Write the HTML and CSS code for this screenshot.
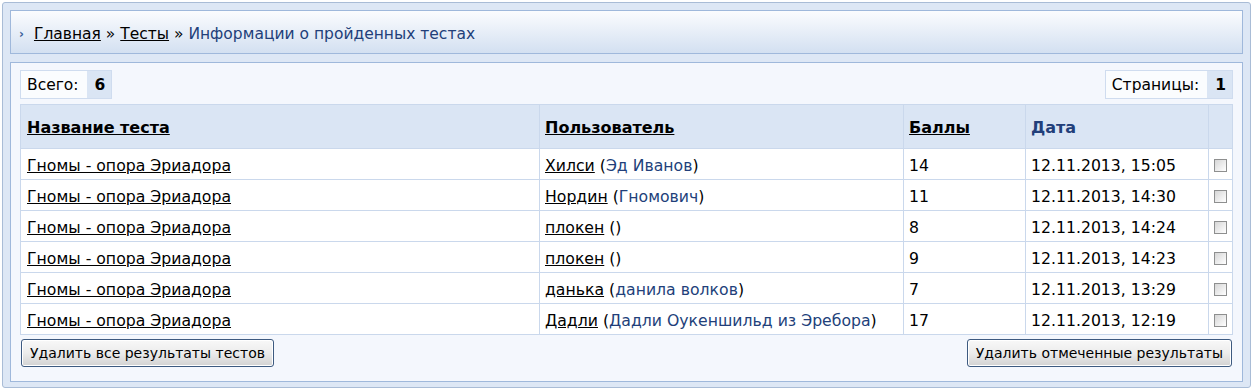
FILE: index.html
```html
<!DOCTYPE html>
<html lang="ru">
<head>
    <meta charset="UTF-8">
    <title>Информации о пройденных тестах</title>
    <link rel="stylesheet" href="styles.css">
</head>
<body>
    <div class="frame">
        <div class="crumbs">
            <span class="crumb-arrow">&#8250;</span>
            <a href="#">Главная</a> &raquo; <a href="#">Тесты</a> &raquo; <span class="current">Информации о пройденных тестах</span>
        </div>

        <div class="panel">
            <div class="pager-row">
                <div class="counter"><span class="label">Всего:</span><span class="value">6</span></div>
                <div class="counter"><span class="label">Страницы:</span><span class="value">1</span></div>
            </div>

            <table class="results">
                <thead>
                    <tr>
                        <th class="col-test"><a href="#">Название теста</a></th>
                        <th class="col-user"><a href="#">Пользователь</a></th>
                        <th class="col-score"><a href="#">Баллы</a></th>
                        <th class="col-date"><span class="sorted">Дата</span></th>
                        <th class="col-check"></th>
                    </tr>
                </thead>
                <tbody>
                    <tr>
                        <td><a href="#">Гномы - опора Эриадора</a></td>
                        <td><a href="#">Хилси</a> (<span class="name">Эд Иванов</span>)</td>
                        <td>14</td>
                        <td>12.11.2013, 15:05</td>
                        <td class="check"><span class="box"></span></td>
                    </tr>
                    <tr>
                        <td><a href="#">Гномы - опора Эриадора</a></td>
                        <td><a href="#">Нордин</a> (<span class="name">Гномович</span>)</td>
                        <td>11</td>
                        <td>12.11.2013, 14:30</td>
                        <td class="check"><span class="box"></span></td>
                    </tr>
                    <tr>
                        <td><a href="#">Гномы - опора Эриадора</a></td>
                        <td><a href="#">плокен</a> ()</td>
                        <td>8</td>
                        <td>12.11.2013, 14:24</td>
                        <td class="check"><span class="box"></span></td>
                    </tr>
                    <tr>
                        <td><a href="#">Гномы - опора Эриадора</a></td>
                        <td><a href="#">плокен</a> ()</td>
                        <td>9</td>
                        <td>12.11.2013, 14:23</td>
                        <td class="check"><span class="box"></span></td>
                    </tr>
                    <tr>
                        <td><a href="#">Гномы - опора Эриадора</a></td>
                        <td><a href="#">данька</a> (<span class="name">данила волков</span>)</td>
                        <td>7</td>
                        <td>12.11.2013, 13:29</td>
                        <td class="check"><span class="box"></span></td>
                    </tr>
                    <tr>
                        <td><a href="#">Гномы - опора Эриадора</a></td>
                        <td><a href="#">Дадли</a> (<span class="name">Дадли Оукеншильд из Эребора</span>)</td>
                        <td>17</td>
                        <td>12.11.2013, 12:19</td>
                        <td class="check"><span class="box"></span></td>
                    </tr>
                </tbody>
            </table>

            <div class="actions">
                <button class="btn">Удалить все результаты тестов</button>
                <button class="btn">Удалить отмеченные результаты</button>
            </div>
        </div>
    </div>
</body>
</html>
```

FILE: styles.css
```css
body {
    margin: 0;
    padding: 2px;
    background: #ffffff;
    font-family: 'DejaVu Sans', Verdana, sans-serif;
    font-size: 15px;
    color: #000000;
}

.frame {
    background: #dde7f5;
    border: 1px solid #a9bcd6;
    border-radius: 3px;
    padding: 7px;
    height: 386px;
    box-sizing: border-box;
}

.crumbs {
    height: 44px;
    box-sizing: border-box;
    border: 1px solid #9fb8db;
    background: linear-gradient(to bottom, #fbfcfe, #d3e0f1);
    padding: 4px 0 0 8px;
    display: flex;
    align-items: center;
    font-size: 15.5px;
    white-space: pre;
}

.crumb-arrow {
    color: #3a5e9a;
    font-size: 12px;
    margin-right: 10px;
    font-weight: bold;
}

.crumbs a {
    color: #000000;
}

.crumbs .current {
    color: #223f7a;
}

.panel {
    margin-top: 8px;
    background: #f4f7fd;
    border: 1px solid #9fb8db;
    padding: 7px 9px 0 9px;
    height: 320px;
    box-sizing: border-box;
}

.pager-row {
    display: flex;
    justify-content: space-between;
}

.counter {
    display: flex;
    border: 1px solid #cfdcef;
    height: 29px;
    box-sizing: border-box;
    align-items: stretch;
    font-size: 15.5px;
}

.counter .label {
    background: #fafcfe;
    padding: 1px 8px 0 6px;
    display: flex;
    align-items: center;
}

.counter .value {
    background: #dae5f4;
    padding: 1px 6px 0 8px;
    font-weight: bold;
    display: flex;
    align-items: center;
}

.results {
    width: 100%;
    border-collapse: collapse;
    margin-top: 5px;
    background: #ffffff;
}

.results th,
.results td {
    border: 1px solid #cad8ec;
    text-align: left;
    padding: 2px 0 0 5px;
    font-size: 15.7px;
    white-space: nowrap;
}

.results th {
    background: #dae5f4;
    height: 41px;
    font-weight: bold;
    font-size: 16px;
}

.results td {
    height: 28px;
}

.results tr > :first-child {
    padding-left: 6px;
}

.results a {
    color: #000000;
}

.results .sorted {
    color: #223f7a;
}

.results .name {
    color: #223f7a;
}

.col-test { width: 512px; }
.col-user { width: 358px; }
.col-score { width: 116px; }
.col-date { width: 177px; }

.results td.check {
    padding: 0;
    text-align: center;
}

.box {
    display: inline-block;
    width: 11px;
    height: 11px;
    border: 1px solid #8e8f8f;
    background: linear-gradient(135deg, #d6d6d6, #ffffff);
    vertical-align: middle;
}

.actions {
    display: flex;
    justify-content: space-between;
    margin-top: 4px;
    padding: 0 1px;
}

.btn {
    font-family: inherit;
    font-size: 14px;
    height: 28px;
    padding: 0 8px;
    border: 1px solid #3d5a80;
    border-radius: 3px;
    background: linear-gradient(to bottom, #f8f8f8 0%, #ececec 50%, #d2d2d2 100%);
    box-shadow: inset 0 0 0 1px #ffffff;
    color: #000000;
}
```
